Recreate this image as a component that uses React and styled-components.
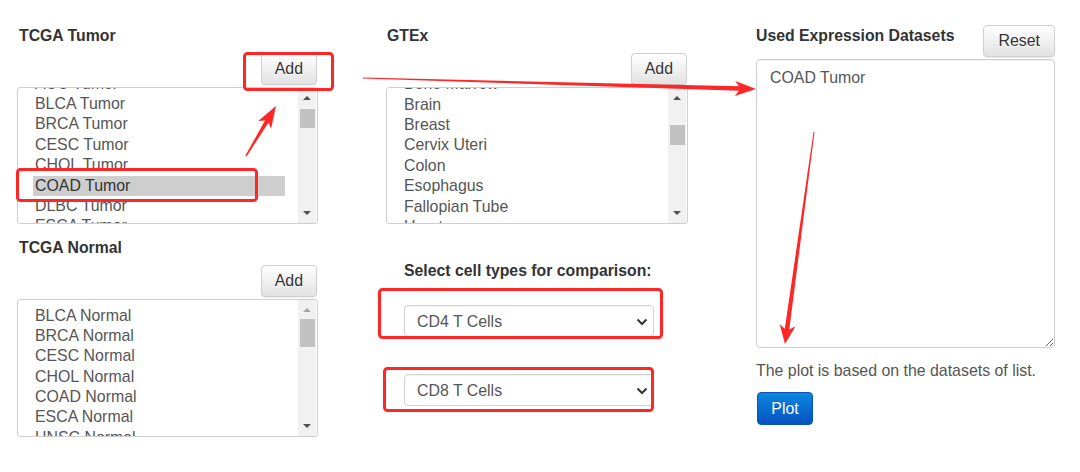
import React from "react";
import styled, { createGlobalStyle } from "styled-components";

const Global = createGlobalStyle`
  html, body { margin: 0; padding: 0; background: #fff; }
  body { font-family: "Liberation Sans", Arial, sans-serif; color: #333; }
  * { box-sizing: border-box; }
`;

const Page = styled.div`
  position: relative;
  width: 1080px;
  height: 472px;
  display: grid;
  grid-template-columns: 301px 302px 299px;
  column-gap: 68px;
  padding-left: 17px;
  padding-top: 25px;
  font-size: 15.9px;
`;

const Column = styled.div`
  display: flex;
  flex-direction: column;
`;

const Title = styled.div`
  font-weight: bold;
  font-size: 15.8px;
  line-height: 21px;
  height: 20px;
  padding-left: ${(p) => p.$indent ?? 2}px;
  margin-top: ${(p) => p.$mt ?? 0}px;
  color: #333;
  white-space: nowrap;
`;

const ButtonRow = styled.div`
  display: flex;
  justify-content: flex-end;
  margin-top: 8px;
  padding-right: 1px;
`;

const Button = styled.button`
  font-family: inherit;
  font-size: 15.9px;
  height: 32px;
  padding: 0 ${(p) => p.$px || 13}px;
  color: #333;
  border: 1px solid #d0d0d0;
  border-radius: 4px;
  background-image: linear-gradient(to bottom, #ffffff 0%, #e2e2e2 100%);
  text-shadow: 0 1px 0 #fff;
  box-shadow: inset 0 1px 0 rgba(255, 255, 255, 0.15), 0 1px 1px rgba(0, 0, 0, 0.075);
  cursor: pointer;
`;

const PrimaryButton = styled.button`
  font-family: inherit;
  font-size: 15.9px;
  height: 33px;
  width: 56px;
  margin-top: 11px;
  margin-left: 1px;
  color: #fff;
  border: 1px solid #0756b8;
  border-radius: 4px;
  background-image: linear-gradient(to bottom, #0c86df 0%, #0553c1 100%);
  text-shadow: 0 -1px 0 rgba(0, 0, 0, 0.2);
  cursor: pointer;
`;

const ListBox = styled.div`
  margin-top: 2px;
  height: ${(p) => p.$h}px;
  border: 1px solid #cfcfcf;
  border-radius: 3px;
  display: flex;
  overflow: hidden;
  background: #fff;
`;

const ListViewport = styled.div`
  flex: 1;
  overflow: hidden;
  padding: 0 13px 0 15px;
`;

const ListInner = styled.div`
  margin-top: ${(p) => p.$offset}px;
`;

const Option = styled.div`
  height: 20.4px;
  line-height: 20.4px;
  padding: 0 2px;
  white-space: nowrap;
  color: ${(p) => (p.$selected ? "#333" : "#555")};
  background: ${(p) => (p.$selected ? "#cecece" : "transparent")};
`;

const Scrollbar = styled.div`
  width: 18px;
  margin-right: 1px;
  background: #f1f1f1;
  display: flex;
  flex-direction: column;
  align-items: center;
  padding-top: ${(p) => p.$thumbTop}px;
  position: relative;
`;

const Thumb = styled.div`
  width: 15px;
  height: ${(p) => p.$h}px;
  background: #c1c1c1;
`;

const ArrowGlyph = styled.div`
  position: absolute;
  left: 50%;
  transform: translateX(-50%);
  width: 0;
  height: 0;
  border-left: 4px solid transparent;
  border-right: 4px solid transparent;
  ${(p) =>
    p.$dir === "up"
      ? `top: 8px; border-bottom: 4px solid ${p.$dim ? "#a3a3a3" : "#505050"};`
      : `bottom: 8px; border-top: 4px solid #505050;`}
`;

const Indented = styled.div`
  padding-left: 18px;
  display: flex;
  flex-direction: column;
`;

const SelectBox = styled.div`
  width: 250px;
  height: 32px;
  margin-top: ${(p) => p.$mt}px;
  border: 1px solid #d2d2d2;
  border-radius: 4px;
  padding: 1px 5px 0 12px;
  display: flex;
  align-items: center;
  justify-content: space-between;
  color: #555;
  background: #fff;
  box-shadow: inset 0 1px 1px rgba(0, 0, 0, 0.05);
`;

const HeaderRow = styled.div`
  display: flex;
  justify-content: space-between;
  align-items: flex-start;
`;

const TextArea = styled.textarea`
  margin-top: 2px;
  width: 299px;
  height: 289px;
  border: 1px solid #cfcfcf;
  border-radius: 4px;
  padding: 8px 13px;
  font-family: inherit;
  font-size: 15.9px;
  line-height: 20px;
  color: #555;
  resize: vertical;
  outline: none;
  box-shadow: inset 0 1px 1px rgba(0, 0, 0, 0.05);
`;

const Help = styled.div`
  margin-top: 13px;
  line-height: 20px;
  color: #555;
  white-space: nowrap;
`;

const Overlay = styled.svg`
  position: absolute;
  left: 0;
  top: 0;
  pointer-events: none;
`;

function List({ items, offset, h, selected, thumbTop, thumbH, upDim }) {
  return (
    <ListBox $h={h}>
      <ListViewport>
        <ListInner $offset={offset}>
          {items.map((it) => (
            <Option key={it} $selected={it === selected}>
              {it}
            </Option>
          ))}
        </ListInner>
      </ListViewport>
      <Scrollbar $thumbTop={thumbTop}>
        <ArrowGlyph $dir="up" $dim={upDim} />
        <Thumb $h={thumbH} />
        <ArrowGlyph $dir="down" />
      </Scrollbar>
    </ListBox>
  );
}

function Chevron() {
  return (
    <svg width="12" height="8" viewBox="0 0 12 8">
      <path d="M1.5 1.5 L6 6 L10.5 1.5" fill="none" stroke="#333" strokeWidth="2" />
    </svg>
  );
}

function arrowPoints(tx, ty, px, py, w0, w1, hl, hw) {
  const dx = px - tx;
  const dy = py - ty;
  const len = Math.hypot(dx, dy);
  const ux = dx / len;
  const uy = dy / len;
  const nx = -uy;
  const ny = ux;
  const bx = px - ux * hl;
  const by = py - uy * hl;
  const nkx = px - ux * (hl - 4);
  const nky = py - uy * (hl - 4);
  const pts = [
    [tx + nx * w0 / 2, ty + ny * w0 / 2],
    [nkx + nx * w1 / 2, nky + ny * w1 / 2],
    [bx + nx * hw / 2, by + ny * hw / 2],
    [px, py],
    [bx - nx * hw / 2, by - ny * hw / 2],
    [nkx - nx * w1 / 2, nky - ny * w1 / 2],
    [tx - nx * w0 / 2, ty - ny * w0 / 2],
  ];
  return pts.map((p) => p.map((v) => v.toFixed(1)).join(",")).join(" ");
}

const RED = "#ff2626";

export default function App() {
  const tumor = [
    "ACC Tumor",
    "BLCA Tumor",
    "BRCA Tumor",
    "CESC Tumor",
    "CHOL Tumor",
    "COAD Tumor",
    "DLBC Tumor",
    "ESCA Tumor",
  ];
  const normal = [
    "BLCA Normal",
    "BRCA Normal",
    "CESC Normal",
    "CHOL Normal",
    "COAD Normal",
    "ESCA Normal",
    "HNSC Normal",
  ];
  const gtex = [
    "Bone Marrow",
    "Brain",
    "Breast",
    "Cervix Uteri",
    "Colon",
    "Esophagus",
    "Fallopian Tube",
    "Heart",
  ];

  return (
    <>
      <Global />
      <Page>
        <Column>
          <Title>TCGA Tumor</Title>
          <ButtonRow>
            <Button>Add</Button>
          </ButtonRow>
          <List
            items={tumor}
            offset={-14.4}
            h={137}
            selected="COAD Tumor"
            thumbTop={21}
            thumbH={19}
          />
          <Title $mt={13}>TCGA Normal</Title>
          <ButtonRow>
            <Button>Add</Button>
          </ButtonRow>
          <List items={normal} offset={5.5} h={138} thumbTop={19} thumbH={28} upDim />
        </Column>

        <Column>
          <Title $indent={1}>GTEx</Title>
          <ButtonRow>
            <Button>Add</Button>
          </ButtonRow>
          <List items={gtex} offset={-13.8} h={137} thumbTop={37} thumbH={20} />
          <Indented>
            <Title $mt={36} $indent={0}>Select cell types for comparison:</Title>
            <SelectBox $mt={25}>
              <span>CD4 T Cells</span>
              <Chevron />
            </SelectBox>
            <SelectBox $mt={37}>
              <span>CD8 T Cells</span>
              <Chevron />
            </SelectBox>
          </Indented>
        </Column>

        <Column>
          <HeaderRow>
            <Title $indent={0}>Used Expression Datasets</Title>
            <Button $px={14}>Reset</Button>
          </HeaderRow>
          <TextArea readOnly defaultValue="COAD Tumor" />
          <Help>The plot is based on the datasets of list.</Help>
          <div>
            <PrimaryButton>Plot</PrimaryButton>
          </div>
        </Column>

        <Overlay width="1080" height="472" viewBox="0 0 1080 472">
          <g fill="none" stroke={RED} strokeWidth="3">
            <rect x="244.5" y="53.5" width="88" height="36" rx="3" />
            <rect x="17.5" y="169.5" width="239" height="31" rx="3" />
            <rect x="379.5" y="289.5" width="282" height="48" rx="3" />
            <rect x="384.5" y="368.5" width="268" height="42" rx="3" />
          </g>
          <g fill={RED}>
            <polygon points={arrowPoints(246, 156, 276, 106, 1.5, 4, 22, 15)} />
            <polygon points={arrowPoints(363, 78, 756, 89, 1, 4.5, 21, 15)} />
            <polygon points={arrowPoints(814, 132, 785, 344, 1, 4.5, 19, 16)} />
          </g>
        </Overlay>
      </Page>
    </>
  );
}
